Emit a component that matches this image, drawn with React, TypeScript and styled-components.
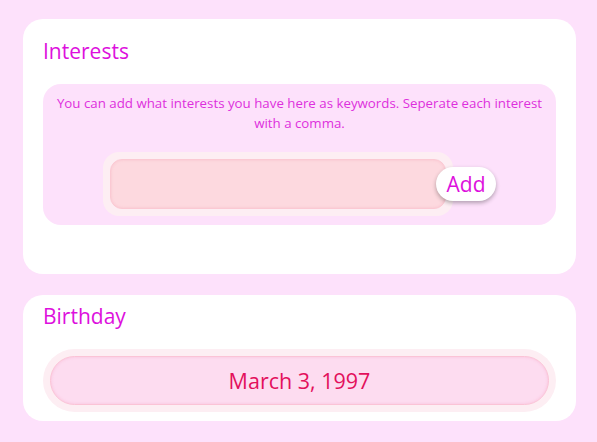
import React from "react";
import styled, { createGlobalStyle } from "styled-components";

const GlobalStyle = createGlobalStyle`
    html, body {
        margin: 0;
        padding: 0;
        background: #fde1fb;
        font-family: "Open Sans", "Noto Sans", sans-serif;
    }
`

const Page = styled.div`
    display: flex;
    flex-direction: column;
    gap: 21px;
    padding: 19px 21px 21px 23px;
    min-height: 442px;
    box-sizing: border-box;
`

const Card = styled.section<{ pad: string }>`
    background: #ffffff;
    border-radius: 20px;
    padding: ${props => props.pad};
    display: flex;
    flex-direction: column;
`

const Title = styled.h2<{ gap: number }>`
    margin: 0 0 ${props => props.gap}px 0;
    font-size: 21px;
    font-weight: 400;
    line-height: 27px;
    color: #dd10dd;
`

const InfoBox = styled.div`
    background: #fde1fb;
    border-radius: 18px;
    padding: 9px 10px 9px;
    display: flex;
    flex-direction: column;
    align-items: center;
`

const Hint = styled.p`
    margin: 0 0 19px 0;
    font-size: 13.3px;
    font-weight: 400;
    line-height: 20px;
    text-align: center;
    color: #dd30dd;
`

const InputRow = styled.div`
    display: flex;
    align-items: center;
`

const FieldShell = styled.div<{ round?: boolean }>`
    background: #fdeef3;
    border-radius: ${props => props.round ? "32px" : "16px"};
    padding: 7px;
    box-sizing: border-box;
`

const TextField = styled.input`
    display: block;
    width: 336px;
    height: 50px;
    box-sizing: border-box;
    border: 1px solid #fbc9d3;
    border-radius: 12px;
    background: #fdd9df;
    box-shadow: inset 0 0 3px rgba(245, 160, 180, 0.4);
    outline: none;
    font-family: inherit;
    font-size: 18px;
    color: #d0105a;
    padding: 0 14px;
`

const AddButton = styled.button`
    margin-left: -17px;
    width: 60px;
    height: 34px;
    border: none;
    border-radius: 17px;
    background: #ffffff;
    box-shadow: 0 2px 4px rgba(0, 0, 0, 0.3);
    font-family: inherit;
    font-size: 21px;
    font-weight: 400;
    line-height: 34px;
    color: #dd10dd;
    padding: 0;
    position: relative;
    cursor: pointer;
`

const DateValue = styled.div`
    height: 49px;
    box-sizing: border-box;
    border: 1px solid #fbc3d6;
    border-radius: 25px;
    background: #fddcf0;
    box-shadow: inset 0 0 3px rgba(245, 150, 185, 0.4);
    display: flex;
    align-items: center;
    justify-content: center;
    font-size: 21.5px;
    font-weight: 400;
    color: #e3105c;
`

export default function App() {
    return (
        <>
            <GlobalStyle />
            <Page>
                <Card pad="19px 20px 49px 20px">
                    <Title gap={19}>Interests</Title>
                    <InfoBox>
                        <Hint>
                            You can add what interests you have here as keywords. Seperate each interest with a comma.
                        </Hint>
                        <InputRow>
                            <FieldShell>
                                <TextField type="text" />
                            </FieldShell>
                            <AddButton>Add</AddButton>
                        </InputRow>
                    </InfoBox>
                </Card>
                <Card pad="8px 20px 9px 20px">
                    <Title gap={19}>Birthday</Title>
                    <FieldShell round>
                        <DateValue>March 3, 1997</DateValue>
                    </FieldShell>
                </Card>
            </Page>
        </>
    )
}
